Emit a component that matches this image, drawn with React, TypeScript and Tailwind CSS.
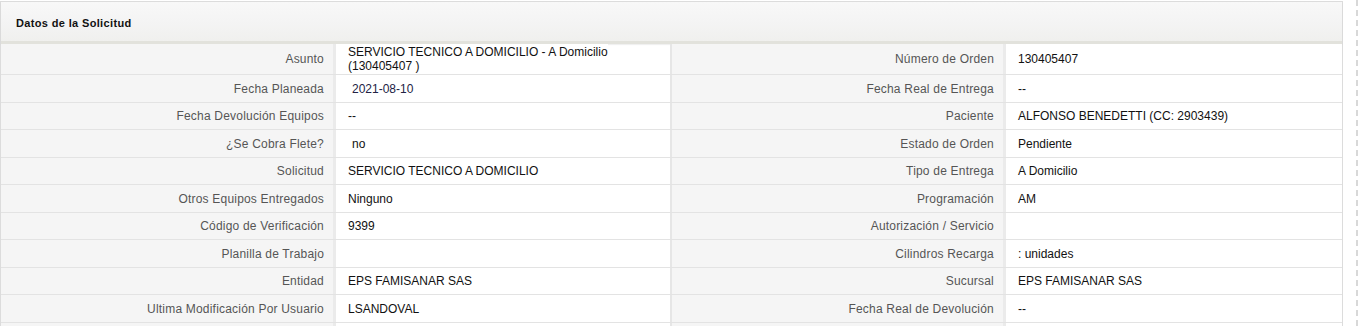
import React from "react";

const rows: [string, React.ReactNode, string, React.ReactNode, boolean?][] = [
  ["Asunto", <>SERVICIO TECNICO A DOMICILIO - A Domicilio<br />(130405407 )</>, "Número de Orden", "130405407", true],
  ["Fecha Planeada", <span className="pl-1 text-[#222244]">2021-08-10</span>, "Fecha Real de Entrega", "--"],
  ["Fecha Devolución Equipos", "--", "Paciente", "ALFONSO BENEDETTI (CC: 2903439)"],
  ["¿Se Cobra Flete?", <span className="pl-1">no</span>, "Estado de Orden", "Pendiente"],
  ["Solicitud", "SERVICIO TECNICO A DOMICILIO", "Tipo de Entrega", "A Domicilio"],
  ["Otros Equipos Entregados", "Ninguno", "Programación", "AM"],
  ["Código de Verificación", "9399", "Autorización / Servicio", ""],
  ["Planilla de Trabajo", "", "Cilindros Recarga", ": unidades"],
  ["Entidad", "EPS FAMISANAR SAS", "Sucursal", "EPS FAMISANAR SAS"],
  ["Ultima Modificación Por Usuario", "LSANDOVAL", "Fecha Real de Devolución", "--"],
  ["", "", "", ""],
];

function Label({ children }: { children: React.ReactNode }) {
  return (
    <div className="flex items-center justify-end pr-[9px] text-[12px] tracking-[0.2px] text-[#555] bg-[#f5f5f5] border-r-[3px] border-[#ebebeb]">
      {children}
    </div>
  );
}

function Value({ children }: { children: React.ReactNode }) {
  return (
    <div className="flex items-center pl-[12px] text-[12px] leading-[14px] text-[#111] bg-white">
      {children}
    </div>
  );
}

export default function App() {
  return (
    <div className="w-[1365px] h-[326px] overflow-hidden bg-white flex" style={{ fontFamily: '"Liberation Sans", Arial, sans-serif' }}>
      <div className="w-[1343px] mt-[1px] border-l border-t border-r border-[#dcdcdc] flex flex-col">
        <div className="h-[42px] shrink-0 flex items-center pl-[15px] pt-[3px] text-[11px] tracking-[0.35px] font-bold text-[#111] bg-gradient-to-b from-[#f8f8f8] via-[#f4f4f4] to-[#f0f0ee] border-b-[3px] border-[#e2e2dc] shadow-[0_1px_1px_rgba(0,0,0,0.06)]">
          Datos de la Solicitud
        </div>
        <div className="flex flex-col">
          {rows.map((r, i) => (
            <div
              key={i}
              className={`grid grid-cols-[335px_336px_334px_1fr] border-b border-[#e3e3e3] ${r[4] ? "h-[31px]" : i % 2 === 1 ? "h-[28px]" : "h-[27px]"}`}
            >
              <Label>{r[0]}</Label>
              <div className="flex border-r-[2px] border-[#e6e6e6]"><div className="flex-1 flex"><Value>{r[1]}</Value></div></div>
              <Label>{r[2]}</Label>
              <Value>{r[3]}</Value>
            </div>
          ))}
        </div>
      </div>
      <div className="ml-[13px] w-0 h-[326px] border-l-[2px] border-dashed border-[#d8d8d8]" />
    </div>
  );
}
